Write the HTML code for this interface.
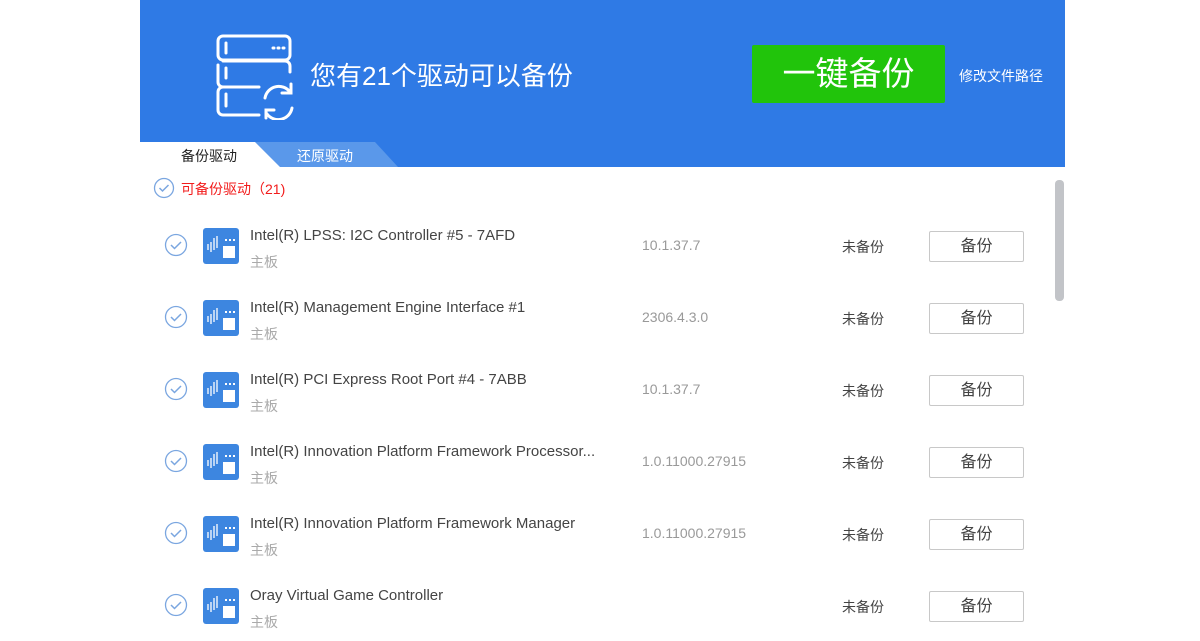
<!DOCTYPE html>
<html><head><meta charset="utf-8"><style>
*{margin:0;padding:0;box-sizing:border-box}
body{width:1200px;height:600px;background:#fff;position:relative;overflow:hidden;font-family:"Liberation Sans","Noto Sans CJK SC",sans-serif}
.hdr{position:absolute;left:140px;top:0;width:925px;height:167px;background:#2f7ae5}
.t{position:absolute;white-space:nowrap}
.btn{position:absolute;left:752px;top:45px;width:193px;height:58px;background:#21c40b;border-radius:2px;color:#fff;font-size:33px;text-align:center;line-height:58px}
.row{position:absolute;left:140px;width:910px;height:72px}
.chk{position:absolute;left:24px;width:24px;height:24px}
.ic{position:absolute;left:63px;width:36px;height:36px;background:#3d86e0;border-radius:3px}
.name{position:absolute;left:110px;font-size:15px;color:#444}
.sub{position:absolute;left:110px;font-size:14px;color:#aaa}
.ver{position:absolute;left:502px;font-size:14px;color:#999}
.st{position:absolute;left:702px;font-size:14px;color:#444}
.b{position:absolute;left:789px;width:95px;height:31px;border:1px solid #c8c8c8;border-radius:2px;text-align:center;line-height:29px;font-size:16px;color:#444}
</style></head><body>
<div class="hdr"></div>
<svg style="position:absolute;left:216px;top:34px" width="84" height="86" viewBox="0 0 84 86" fill="none" stroke="#fff" stroke-width="3" stroke-linecap="round">
<rect x="2" y="2" width="72" height="24" rx="5"/><path d="M10 9v10"/><path d="M57 14h1M62 14h1M67 14h1"/>
<path d="M7 27h62a5 5 0 0 1 5 5v6M2 31v17a5 5 0 0 0 5 5h36M10 34v10"/>
<path d="M7 53H7a5 5 0 0 0-5 5v18a5 5 0 0 0 5 5h36M10 60v12"/>
<path d="M49 64a14 14 0 0 1 25-6M76 74a14 14 0 0 1-25 6"/><path d="M75 50v9h-9M50 84v-8h8"/>
</svg>
<div class="t" style="left:310px;top:56px;font-size:26px;color:#fff">您有21个驱动可以备份</div>
<div class="btn">一键备份</div>
<div class="t" style="left:959px;top:66px;font-size:14px;color:#fff">修改文件路径</div>
<svg style="position:absolute;left:140px;top:142px" width="260" height="26"><polygon points="115,0 235,0 258,25 140,25" fill="#5a98ea"/><polygon points="0,0 115,0 140,25 0,25" fill="#fff"/></svg>
<div class="t" style="left:181px;top:146px;font-size:14px;color:#222">备份驱动</div>
<div class="t" style="left:297px;top:146px;font-size:14px;color:#fff">还原驱动</div>
<svg style="position:absolute;left:153px;top:177px" width="22" height="22"><circle cx="11" cy="11" r="9.5" fill="none" stroke="#7aa6e0" stroke-width="1.3"/><path d="M6.5 11l3 3 6-6" fill="none" stroke="#7aa6e0" stroke-width="1.5"/></svg>
<div class="t" style="left:181px;top:179px;font-size:14px;color:#f21c1c">可备份驱动（21)</div>
<div style="position:absolute;left:1055px;top:180px;width:9px;height:121px;background:#c2c4c8;border-radius:4px"></div>
<div id="rows"></div>
<script>
const d=[["Intel(R) LPSS: I2C Controller #5 - 7AFD","10.1.37.7"],["Intel(R) Management Engine Interface #1","2306.4.3.0"],["Intel(R) PCI Express Root Port #4 - 7ABB","10.1.37.7"],["Intel(R) Innovation Platform Framework Processor...","1.0.11000.27915"],["Intel(R) Innovation Platform Framework Manager","1.0.11000.27915"],["Oray Virtual Game Controller",""]];
let h="";d.forEach((r,i)=>{const y=209+i*72;h+=`<div class="row" style="top:${y}px">
<svg class="chk" style="top:24px" viewBox="0 0 24 24"><circle cx="12" cy="12" r="10.5" fill="none" stroke="#7aa6e0" stroke-width="1.3"/><path d="M7 12l3.5 3.5 6.5-6.5" fill="none" stroke="#7aa6e0" stroke-width="1.5"/></svg>
<div class="ic" style="top:19px"><svg width="36" height="36"><path d="M5 22v-6M8 24v-10M11 22v-12M14 20v-12" stroke="#fff" stroke-width="1.3"/><rect x="20" y="18" width="12" height="12" fill="#fff"/><path d="M22 12h2M26 12h2M30 12h2" stroke="#fff" stroke-width="2"/></svg></div>
<div class="name" style="top:18px">${r[0]}</div><div class="sub" style="top:43px">主板</div>
<div class="ver" style="top:28px">${r[1]}</div>
<div class="st" style="top:28px">未备份</div><div class="b" style="top:22px">备份</div></div>`});
document.getElementById("rows").innerHTML=h;
</script>
</body></html>
